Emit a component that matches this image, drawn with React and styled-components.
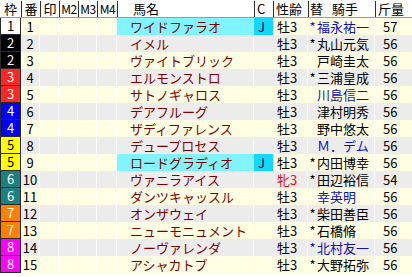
import styled, { createGlobalStyle } from "styled-components"

const Global = createGlobalStyle`
body{
margin:0;
background:#fff;
font-family:"Noto Sans CJK JP","DejaVu Sans",sans-serif;
}
`;

const WAKU = {
  1: ["#ffffff", "#000"],
  2: ["#000000", "#fff"],
  3: ["#ff2626", "#fff"],
  4: ["#0000ff", "#fff"],
  5: ["#ffff00", "#000"],
  6: ["#1a8080", "#fff"],
  7: ["#ff8000", "#fff"],
  8: ["#ff00ff", "#fff"],
};

const horses = [
  [1, 1, "ワイドファラオ", true, "牡3", "*", "福永祐一", true, 57],
  [2, 2, "イメル", false, "牡3", "*", "丸山元気", false, 56],
  [2, 3, "ヴァイトブリック", false, "牡3", "", "戸崎圭太", false, 56],
  [3, 4, "エルモンストロ", false, "牡3", "*", "三浦皇成", false, 56],
  [3, 5, "サトノギャロス", false, "牡3", "", "川島信二", true, 56],
  [4, 6, "デアフルーグ", false, "牡3", "", "津村明秀", false, 56],
  [4, 7, "ザディファレンス", false, "牡3", "", "野中悠太", false, 56],
  [5, 8, "デュープロセス", false, "牡3", "", "Ｍ．デム", true, 56],
  [5, 9, "ロードグラディオ", true, "牡3", "*", "内田博幸", false, 56],
  [6, 10, "ヴァニラアイス", false, "牝3", "*", "田辺裕信", false, 54],
  [6, 11, "ダンツキャッスル", false, "牡3", "", "幸英明", true, 56],
  [7, 12, "オンザウェイ", false, "牡3", "*", "柴田善臣", false, 56],
  [7, 13, "ニューモニュメント", false, "牡3", "*", "石橋脩", false, 56],
  [8, 14, "ノーヴァレンダ", false, "牡3", "*", "北村友一", true, 56],
  [8, 15, "アシャカトブ", false, "牡3", "*", "大野拓弥", false, 56],
];

const COLS = "21px 19px 19px 19px 19px 20px 137px 19px 35px 67px 37px";

function App() {
  return (
    <Table>
      <Global />
      <Head>
        <HCell center>枠</HCell>
        <HCell center line>番</HCell>
        <HCell center line>印</HCell>
        <HCell center line small>M2</HCell>
        <HCell center line small>M3</HCell>
        <HCell center line small>M4</HCell>
        <HCell line pad="15px">馬名</HCell>
        <HCell line pad="2px">C</HCell>
        <HCell line pad="2px">性齢</HCell>
        <HCell line pad="1px">替<Gap />騎手</HCell>
        <HCell line pad="2px">斤量</HCell>
      </Head>
      {horses.map(([waku, num, name, hl, sex, mark, jockey, blue, kg], i) => (
        <Row key={num} odd={i % 2 === 0}>
          <Waku bg={WAKU[waku][0]} fg={WAKU[waku][1]}>{waku}</Waku>
          <Num>{num}</Num>
          <Cell />
          <Cell />
          <Cell />
          <Cell />
          <Name hl={hl}>{name}</Name>
          <CFlag on={hl}>{hl ? "J" : ""}</CFlag>
          <Sex mare={sex === "牝3"}>{sex}</Sex>
          <Jockey blue={blue}>
            <Mark>{mark}</Mark>
            {jockey}
          </Jockey>
          <Kg>{kg}</Kg>
        </Row>
      ))}
    </Table>
  )
}

const Table = styled.div`
width:412px;
font-size:13px;
color:#000;
`;

const Head = styled.div`
display:grid;
grid-template-columns:${COLS};
height:17px;
border-bottom:1px solid #9a9a9a;
background:#fff;
`;

const HCell = styled.div`
margin-top:1px;
height:16px;
line-height:16px;
box-sizing:border-box;
white-space:nowrap;
font-size:${p => (p.small ? "12px" : "13px")};
letter-spacing:${p => (p.small ? "-0.5px" : "0")};
text-align:${p => (p.center ? "center" : "left")};
padding-left:${p => p.pad || "0"};
border-left:${p => (p.line ? "1px solid #303030" : "none")};
`;

const Gap = styled.span`
display:inline-block;
width:9px;
`;

const Row = styled.div`
display:grid;
grid-template-columns:${COLS};
height:17px;
line-height:17px;
background:${p => (p.odd ? "#ffffe4" : "#ececec")};
`;

const Cell = styled.div`
box-sizing:border-box;
border-right:1px solid #ffffff;
white-space:nowrap;
`;

const Waku = styled(Cell)`
background:${p => p.bg};
color:${p => p.fg};
text-align:center;
border:1px solid #2a2a2a;
border-top:none;
line-height:16px;
`;

const Num = styled(Cell)`
text-align:center;
`;

const Name = styled(Cell)`
padding-left:13px;
color:#800000;
background:${p => (p.hl ? "#80f4ff" : "transparent")};
`;

const CFlag = styled(Cell)`
background:${p => (p.on ? "#10d8ff" : "transparent")};
color:#000040;
padding-left:4px;
border-right:none;
`;

const Sex = styled(Cell)`
padding-left:4px;
color:${p => (p.mare ? "#e01010" : "#000")};
`;

const Jockey = styled(Cell)`
color:${p => (p.blue ? "#1010c0" : "#000")};
`;

const Mark = styled.span`
display:inline-block;
width:9px;
text-align:center;
`;

const Kg = styled(Cell)`
padding-left:8px;
border-right:none;
`;

export default App
